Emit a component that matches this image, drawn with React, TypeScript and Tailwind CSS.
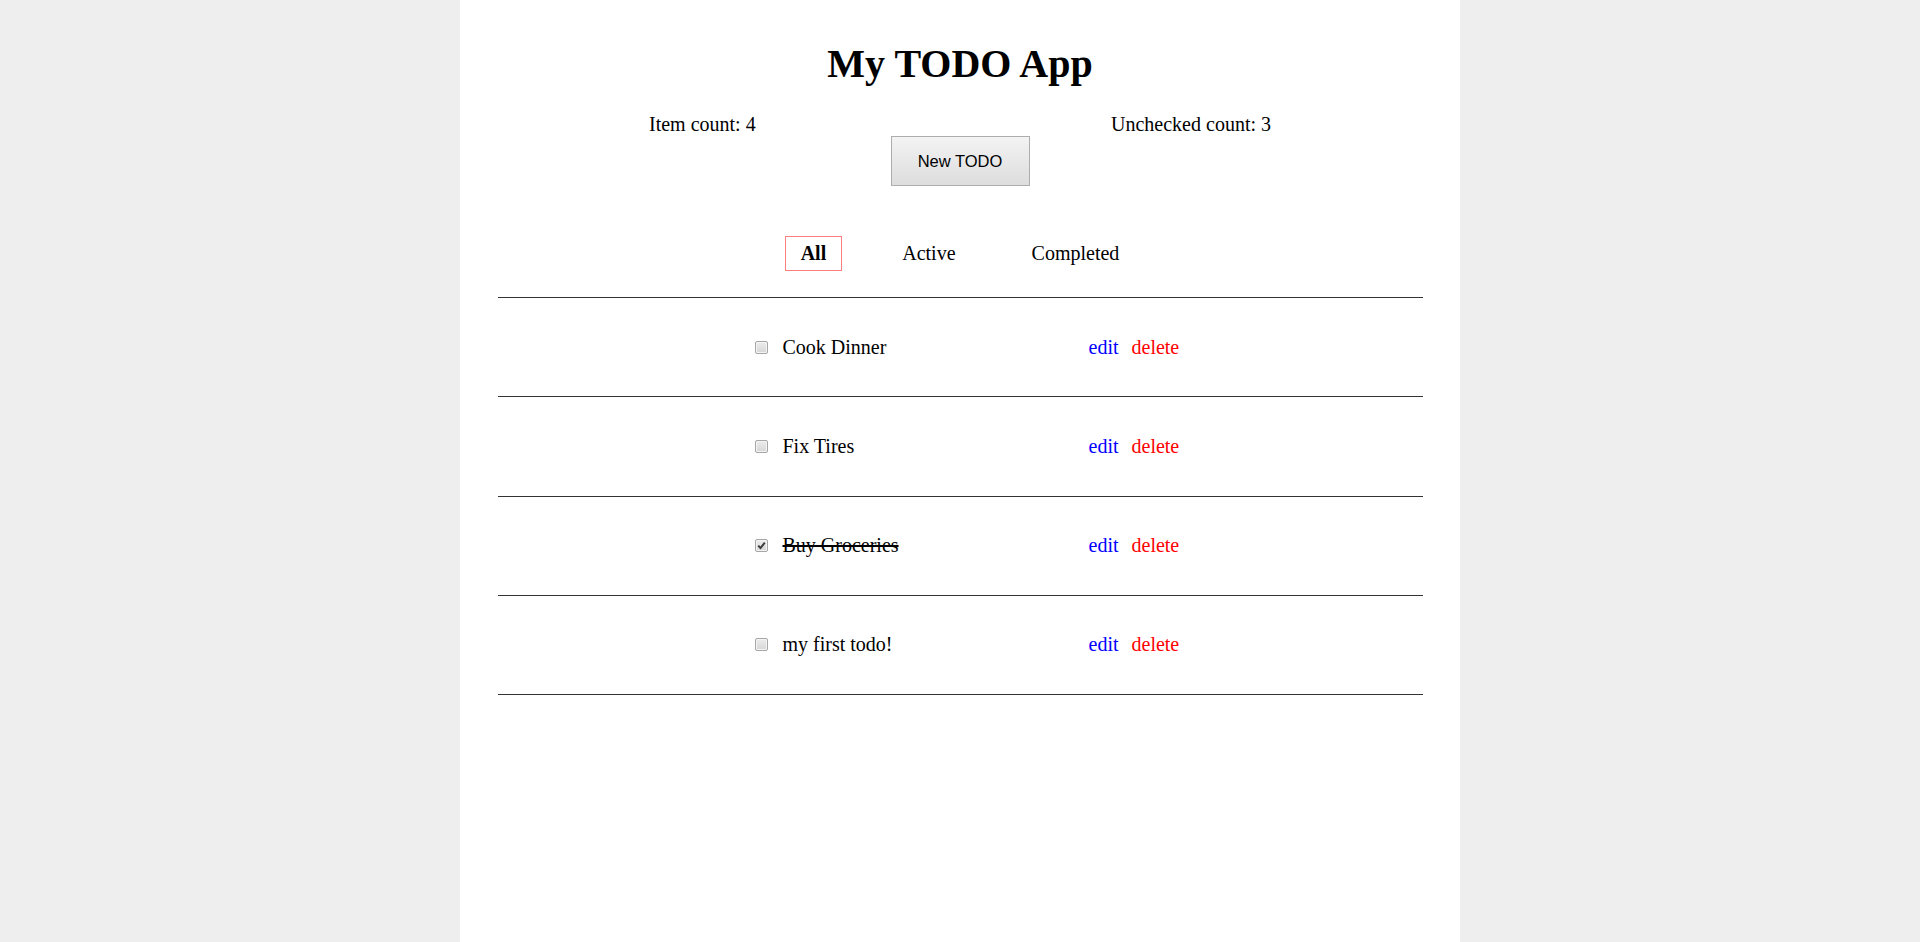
const todos = [
  { id: 1, text: "Cook Dinner", done: false },
  { id: 2, text: "Fix Tires", done: false },
  { id: 3, text: "Buy Groceries", done: true },
  { id: 4, text: "my first todo!", done: false },
];

function CheckBox({ checked }: { checked: boolean }) {
  return (
    <span className="flex h-[13px] w-[13px] shrink-0 items-center justify-center rounded-[2px] border border-[#a6a6a6] bg-linear-to-b from-[#ececec] to-[#d6d6d6] shadow-[inset_0_0_0_1px_#f4f4f4]">
      {checked && (
        <svg width="9" height="9" viewBox="0 0 9 9">
          <path d="M1.2 4.6 L3.5 7 L7.8 1.6" fill="none" stroke="#3a3a3a" strokeWidth="1.9" />
        </svg>
      )}
    </span>
  );
}

function TodoRow({ text, done }: { text: string; done: boolean }) {
  return (
    <li className="flex h-[99.25px] items-center border-b border-[#333333]">
      <div className="ml-[257px] flex items-center">
        <CheckBox checked={done} />
        <span className={"ml-[15px] w-[306px] " + (done ? "line-through" : "")}>{text}</span>
        <a className="text-[#0000ff] cursor-pointer">edit</a>
        <a className="ml-[13px] text-[#ff0000] cursor-pointer">delete</a>
      </div>
    </li>
  );
}

export default function App() {
  return (
    <div className="min-h-screen bg-[#eeeeee] font-['Liberation_Serif','Times_New_Roman',serif] text-[20px] leading-[23px] text-black">
      <div className="mx-auto min-h-screen w-[1000px] bg-white">
        <h1 className="pt-[41px] text-center text-[40px] font-bold leading-[46px] mb-[26px]">My TODO App</h1>

        <div className="flex justify-between px-[189px]">
          <span>Item count: 4</span>
          <span>Unchecked count: 3</span>
        </div>

        <button className="mx-auto block h-[50px] w-[139px] border border-[#adadad] bg-linear-to-b from-[#f3f3f3] to-[#dddddd] pt-[1px] font-['Liberation_Sans',Arial,sans-serif] text-[16.5px] text-black">
          New TODO
        </button>

        <div className="mt-[50px] flex justify-center gap-[44px]">
          <span className="border border-[#ff7f7f] px-[15px] py-[5px] font-bold">All</span>
          <span className="border border-transparent px-[15px] py-[5px]">Active</span>
          <span className="border border-transparent px-[15px] py-[5px]">Completed</span>
        </div>

        <ul className="mx-auto mt-[26px] w-[925px] border-t border-[#333333]">
          {todos.map((t) => (
            <TodoRow key={t.id} text={t.text} done={t.done} />
          ))}
        </ul>
      </div>
    </div>
  );
}
